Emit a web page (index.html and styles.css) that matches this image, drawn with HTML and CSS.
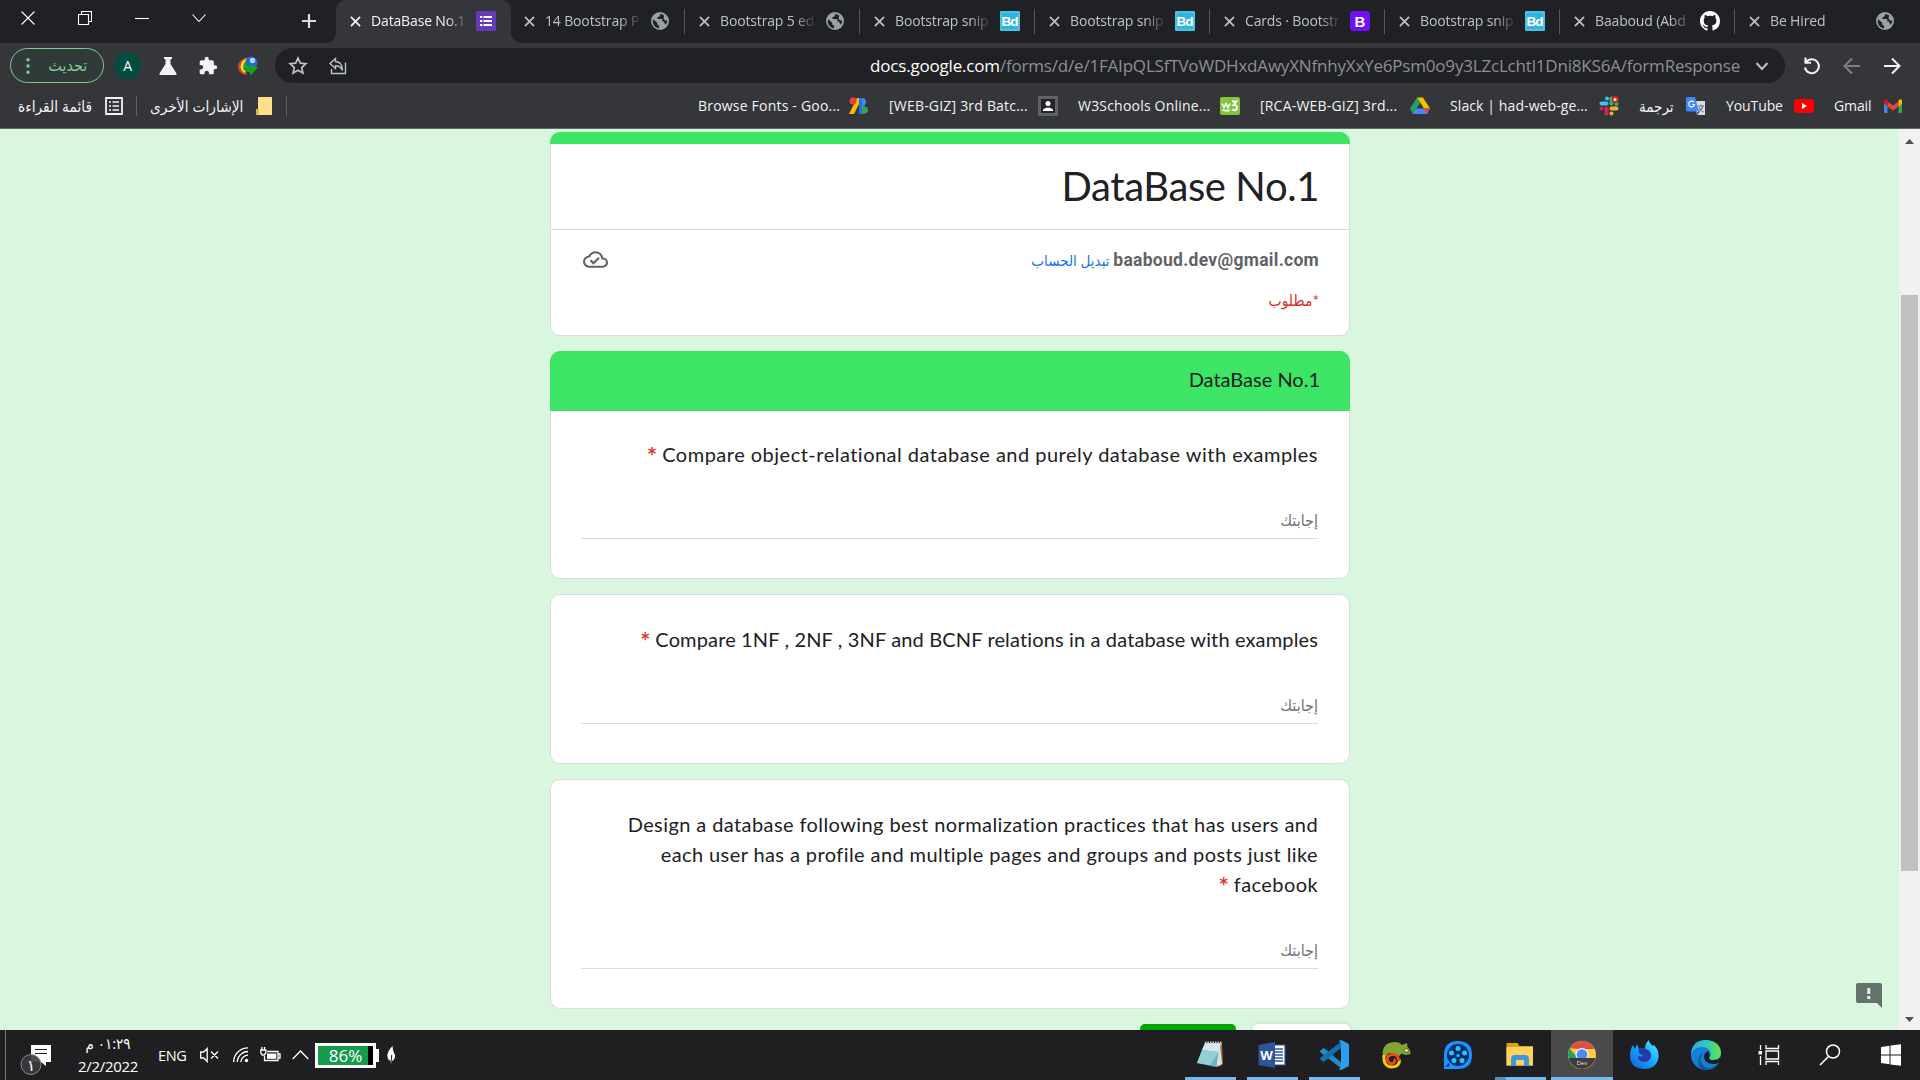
FILE: index.html
```html
<!DOCTYPE html>
<html lang="ar">
<head>
<meta charset="utf-8">
<title>DataBase No.1</title>
<link rel="stylesheet" href="styles.css">
</head>
<body>
<svg class="defs" width="0" height="0">
  <symbol id="x" viewBox="0 0 12 12"><path d="M1 1l10 10M11 1L1 11" fill="none" stroke="currentColor" stroke-width="1.9"/></symbol>
  <symbol id="globe" viewBox="0 0 20 20"><circle cx="10" cy="10" r="9" fill="#9aa0a6"/><path d="M3.2 8.2l4 3.6v1.7l1.9 1.2v2.6C5.500 17 2.800 14 2.800 10zM10.500 2.800l-1 2.600-2 .8v1.800h4.800v2.400h1.600l1.500 3.400c1.200-1.100 1.900-2.400 1.900-4.200h-2.200l-1.600-2 .7-3z" fill="#202124"/></symbol>
  <symbol id="bd" viewBox="0 0 20 20"><rect width="20" height="20" rx="1" fill="#2fb5db"/><rect x="1" y="1" width="18" height="18" fill="none" stroke="#7dd6ee" stroke-width=".7"/><text x="10" y="15" text-anchor="middle" font-family="Liberation Sans" font-weight="bold" font-size="13.500" fill="#fff" textLength="17">Bd</text></symbol>
</svg>

<header class="tabs">
  <div class="window-buttons">
    <svg width="14" height="14" viewBox="0 0 14 14"><path d="M.5.5l13 13M13.500.5l-13 13"/></svg>
    <svg width="14" height="14" viewBox="0 0 14 14"><path d="M.5 3.500h10v10h-10zM3.500 3V.5h10v10H11"/></svg>
    <svg width="14" height="14" viewBox="0 0 14 14"><path d="M0 7.500h14"/></svg>
    <svg width="14" height="14" viewBox="0 0 14 14"><path d="M.5 3.500L7 10.500l6.500-7"/></svg>
  </div>
  <svg class="new-tab" viewBox="0 0 16 16"><path d="M8 1v14M1 8h14" stroke="#dadce0" stroke-width="2.200"/></svg>
  <div class="tab active"><svg class="close"><use href="#x"/></svg><span>DataBase No.1</span><svg class="fav" viewBox="0 0 20 20"><rect width="20" height="20" rx="1.500" fill="#673ab7"/><path d="M4 5h2.300v2H4zM4 9h2.300v2H4zM4 13h2.300v2H4zM7.500 5H16v2H7.500zM7.500 9H16v2H7.500zM7.500 13H16v2H7.500z" fill="#fff"/></svg></div>
  <div class="tab"><svg class="close"><use href="#x"/></svg><span>14 Bootstrap P</span><svg class="fav"><use href="#globe"/></svg></div>
  <div class="tab"><svg class="close"><use href="#x"/></svg><span>Bootstrap 5 ed</span><svg class="fav"><use href="#globe"/></svg></div>
  <div class="tab"><svg class="close"><use href="#x"/></svg><span>Bootstrap snip</span><svg class="fav"><use href="#bd"/></svg></div>
  <div class="tab"><svg class="close"><use href="#x"/></svg><span>Bootstrap snip</span><svg class="fav"><use href="#bd"/></svg></div>
  <div class="tab"><svg class="close"><use href="#x"/></svg><span>Cards · Bootstr</span><svg class="fav" viewBox="0 0 20 20"><rect width="20" height="20" rx="3" fill="#7011f5"/><text x="10" y="15.500" text-anchor="middle" font-family="Liberation Sans" font-weight="bold" font-size="15" fill="#fff">B</text></svg></div>
  <div class="tab"><svg class="close"><use href="#x"/></svg><span>Bootstrap snip</span><svg class="fav"><use href="#bd"/></svg></div>
  <div class="tab"><svg class="close"><use href="#x"/></svg><span>Baaboud (Abd</span><svg class="fav" viewBox="0 0 16 16"><path fill="#fff" d="M8 0C3.580 0 0 3.580 0 8c0 3.540 2.290 6.530 5.470 7.590.4.070.55-.17.55-.38 0-.19-.01-.82-.01-1.490-2.010.37-2.530-.49-2.690-.94-.09-.23-.48-.94-.82-1.130-.28-.15-.68-.52-.01-.53.63-.01 1.080.58 1.230.82.72 1.210 1.870.87 2.330.66.070-.52.28-.87.51-1.070-1.780-.2-3.640-.89-3.640-3.950 0-.87.31-1.590.82-2.150-.08-.2-.36-1.020.08-2.120 0 0 .67-.21 2.200.82.64-.18 1.320-.27 2-.27s1.360.09 2 .27c1.530-1.040 2.200-.82 2.200-.82.44 1.100.16 1.920.08 2.120.51.56.82 1.270.82 2.150 0 3.070-1.870 3.750-3.650 3.950.29.25.54.73.54 1.480 0 1.070-.01 1.930-.01 2.200 0 .21.15.46.55.38A8.010 8.010 0 0016 8c0-4.420-3.580-8-8-8z"/></svg></div>
  <div class="tab"><svg class="close"><use href="#x"/></svg><span>Be Hired</span><svg class="fav"><use href="#globe"/></svg></div>
</header>

<nav class="toolbar">
  <div class="update"><svg width="4" height="16" viewBox="0 0 4 16"><path d="M2 0a1.700 1.700 0 010 3.400A1.700 1.700 0 012 0M2 6.300a1.700 1.700 0 010 3.400 1.700 1.700 0 010-3.400M2 12.600a1.700 1.700 0 010 3.400 1.700 1.700 0 010-3.400" fill="#81c995"/></svg><span dir="rtl">تحديث</span></div>
  <div class="avatar">A</div>
  <svg class="ext" viewBox="0 0 20 20"><path d="M6 1h8v2h-1.500v5L18.500 17.500q.6 1.500-1 1.500h-15q-1.600 0-1-1.500L7.500 8V3H6z" fill="#f1f3f4"/></svg>
  <svg class="ext" viewBox="0 0 24 24"><path d="M20.500 11H19V7c0-1.100-.9-2-2-2h-4V3.500a2.500 2.500 0 00-5 0V5H4c-1.100 0-1.990.9-1.990 2v3.800H3.500c1.490 0 2.700 1.210 2.700 2.700s-1.210 2.700-2.700 2.700H2V20c0 1.100.9 2 2 2h3.800v-1.500c0-1.490 1.210-2.700 2.700-2.700s2.700 1.210 2.700 2.700V22H17c1.100 0 2-.9 2-2v-4h1.500a2.500 2.500 0 000-5z" fill="#f1f3f4"/></svg>
  <svg class="ext" viewBox="0 0 20 20"><circle cx="13" cy="7" r="6.500" fill="#2467cf"/><circle cx="14.500" cy="4.500" r="2.800" fill="#a9d4ff"/><path d="M9 1Q0 4 0 11q.5 6.500 8 8l1-2Q3 15 4 9q1-4 5-8z" fill="#d9442b"/><path d="M9 2Q2.500 5 2.500 11q.5 4 4.500 6l1-2Q4.500 12 6 8z" fill="#f2e332"/><path d="M9 4Q5 8 5.500 12l4 3 1-3Q7.500 9 9 4z" fill="#2a9c3a"/><path d="M4.500 12.500l7-1.500-1-2.500 9.500 3-7.500 8-1-3.500Q7 16 4.500 12.500z" fill="#12a51c"/></svg>
  <div class="omnibox">
    <svg class="star" width="20" height="20" viewBox="0 0 20 20"><path d="M10 2l2.300 5.200 5.600.5-4.200 3.800 1.200 5.600L10 14.200l-4.900 2.900 1.200-5.600L2.100 7.700l5.600-.5z" fill="none" stroke="#bdc1c6" stroke-width="1.700"/></svg>
    <svg class="share" width="20" height="20" viewBox="0 0 20 20"><path d="M7.500 2.500L2 7.500l5.500 5V9.700q5 0 7 4.800 0-8.500-7-9zM3.500 13v4.500h14V6.500" fill="none" stroke="#bdc1c6" stroke-width="1.400"/></svg>
    <div class="url"><b>docs.google.com</b>/forms/d/e/1FAIpQLSfTVoWDHxdAwyXNfnhyXxYe6Psm0o9y3LZcLchtl1Dni8KS6A/formResponse</div>
    <svg class="chev" width="14" height="14" viewBox="0 0 14 14"><path d="M1.500 4L7 10l5.500-6" fill="none" stroke="#bdc1c6" stroke-width="2"/></svg>
  </div>
  <svg class="nav-icon" viewBox="0 0 20 20"><path d="M4.300 6A7 7 0 113 11.500M3.500 1.500V6.800H9" fill="none" stroke="#f1f3f4" stroke-width="2.100"/></svg>
  <svg class="nav-icon" viewBox="0 0 20 20"><path d="M18 10H3M10 2.500L2.500 10l7.500 7.500" fill="none" stroke="#7d7e82" stroke-width="2"/></svg>
  <svg class="nav-icon" viewBox="0 0 20 20"><path d="M2 10h15M10 2.500l7.500 7.500-7.500 7.500" fill="none" stroke="#f1f3f4" stroke-width="2"/></svg>
</nav>

<nav class="bookmarks">
  <div class="saved reading"><span dir="rtl">قائمة القراءة</span><svg width="18" height="18" viewBox="0 0 18 18"><path d="M1 1h16v16H1z" fill="none" stroke="#f1f3f4" stroke-width="1.800"/><path d="M4 5h2M4 9h2M4 13h2M7.500 5H14M7.500 9H14M7.500 13H14" stroke="#f1f3f4" stroke-width="1.700"/></svg></div>
  <div class="saved others"><span dir="rtl">الإشارات الأخرى</span><svg width="16" height="18" viewBox="0 0 16 18"><path d="M2 0h14v18H1q-1 0-1-2v-4h2z" fill="#ffe08a"/><path d="M0 12h3v5q-3 2-3-1z" fill="#e5b73c"/></svg></div>
  <div class="links">
    <div class="bm w1"><span>Browse Fonts - Goo...</span><svg viewBox="0 0 20 20"><path d="M8 2h5L5 18H0z" fill="#fbbc04"/><circle cx="4" cy="5" r="3.500" fill="#ea4335"/><path d="M10 2h4v16h-4z" fill="#1a73e8"/><path d="M13 2q4 0 4 4t-4 4z" fill="#4285f4"/><path d="M13 10q6 0 6 4t-6 4z" fill="#34a853"/></svg></div>
    <div class="bm w2"><span>[WEB-GIZ] 3rd Batc...</span><svg viewBox="0 0 20 20"><rect width="20" height="20" rx="1.500" fill="#5f6368"/><rect x="3" y="3" width="14" height="14" fill="#25262a"/><circle cx="10" cy="7.500" r="2.500" fill="#fff"/><path d="M5 15v-1.500Q10 9.500 15 13.500V15z" fill="#fff"/></svg></div>
    <div class="bm w3"><span>W3Schools Online...</span><svg viewBox="0 0 20 20"><rect y="1" width="20" height="18" rx="2" fill="#86c440"/><path d="M2 7.500l2 4 2-4 2 4 2-4" fill="none" stroke="#fff" stroke-width="1.500"/><path d="M2.500 14q4 1.500 7 0M12 5.500h4.500l-3 3.500q4 0 3.500 3.500-1.500 3-5 1" fill="none" stroke="#fff" stroke-width="1.800"/></svg></div>
    <div class="bm w4"><span>[RCA-WEB-GIZ] 3rd...</span><svg viewBox="0 0 20 20"><path d="M7 1.500h6l7 11h-6z" fill="#fbbc04"/><path d="M7 1.500l3 5.500-7 11-3-5.500z" fill="#1fa463"/><path d="M6 12.500h14L17 18H3z" fill="#4688f4"/><path d="M14 12.500h6L17 18z" fill="#ea4335"/></svg></div>
    <div class="bm w5"><span>Slack | had-web-ge...</span><svg viewBox="0 0 20 20"><g stroke-width="4" stroke-linecap="round"><path d="M2.500 7.500h5M8 2.500v.1" stroke="#36c5f0"/><path d="M12.500 2.500v5M17.500 8v.1" stroke="#2eb67d"/><path d="M12.500 12.500h5M12.500 17.500v.1" stroke="#ecb22e"/><path d="M7.500 12.500v5M2.500 12.500v.1" stroke="#e01e5a"/></g><circle cx="16" cy="3.500" r="3.500" fill="#e01e1e"/><circle cx="16" cy="3.500" r="1.500" fill="#fff"/></svg></div>
    <div class="bm w6"><span dir="rtl">ترجمة</span><svg viewBox="0 0 20 20"><path d="M8 5h11v14h-8z" fill="#dadce0"/><path d="M12 10h6M15 8.500V10M17 10q-1 4-4.500 6M13 11.500q1.500 3 4.500 4.500" fill="none" stroke="#607988" stroke-width="1.100"/><path d="M1 1h8l4 14.500H1.500Q0 15.500 0 14V2q0-1 1-1z" fill="#4285f4"/><path d="M11 16h2.500L11 19.500z" fill="#2b5fb8"/><path d="M8 6.300A2.900 2.900 0 108.500 8.500H6" fill="none" stroke="#fff" stroke-width="1.200"/></svg></div>
    <div class="bm w7"><span>YouTube</span><svg viewBox="0 0 20 20"><rect y="3" width="20" height="14" rx="3.500" fill="#f00"/><path d="M8 7v6l5-3z" fill="#fff"/></svg></div>
    <div class="bm w8"><span>Gmail</span><svg viewBox="0 0 20 20"><path d="M1 5l3.500 2v10H2q-1 0-1-1z" fill="#4285f4"/><path d="M15.500 7L19 5v11q0 1-1 1h-2.500z" fill="#34a853"/><path d="M4.500 5.500l5.500 4 5.500-4v5l-5.500 4-5.500-4z" fill="#ea4335"/><path d="M1 5q0-2.500 2.500-1.500l1 1v6L1 7.500z" fill="#c5221f"/><path d="M19 5q0-2.500-2.500-1.500l-1 1v6L19 7.500z" fill="#fbbc04"/></svg></div>
  </div>
</nav>

<main class="page">
  <form class="form" dir="rtl">
    <section class="card intro">
      <div class="strip"></div>
      <h1 dir="ltr">DataBase No.1</h1>
      <div class="account">
        <p><b>baaboud.dev@gmail.com</b> <a>تبديل الحساب</a></p>
        <svg width="25" height="25" viewBox="0 0 24 24"><path fill="#5f6368" d="M19.350 10.040A7.490 7.490 0 0012 4C9.110 4 6.600 5.640 5.350 8.040A5.994 5.994 0 000 14c0 3.310 2.690 6 6 6h13c2.760 0 5-2.240 5-5 0-2.640-2.050-4.780-4.650-4.960zM19 18H6c-2.210 0-4-1.790-4-4 0-2.050 1.530-3.760 3.560-3.970l1.070-.11.5-.95A5.469 5.469 0 0112 6c2.620 0 4.880 1.860 5.390 4.430l.3 1.500 1.530.11A2.980 2.980 0 0122 15c0 1.650-1.350 3-3 3zm-9-3.820l-2.090-2.090L6.500 13.500 10 17l6.010-6.010-1.410-1.410z"/></svg>
      </div>
      <p class="required">*مطلوب</p>
    </section>
    <section class="card">
      <h2 dir="ltr">DataBase No.1</h2>
      <div class="question first">
        <label><span class="q1">Compare object-relational database and purely database with examples</span> <i>*</i></label>
        <div class="answer">إجابتك</div>
      </div>
    </section>
    <section class="card">
      <div class="question">
        <label><span class="q2">Compare 1NF , 2NF , 3NF and BCNF relations in a database with examples</span> <i>*</i></label>
        <div class="answer">إجابتك</div>
      </div>
    </section>
    <section class="card">
      <div class="question">
        <label><span class="q3">Design a database following best normalization practices that has users and<br>each user has a profile and multiple pages and groups and posts just like<br>facebook</span> <i>*</i></label>
        <div class="answer">إجابتك</div>
      </div>
    </section>
    <div class="actions"><div class="back"></div><div class="send"></div></div>
  </form>
  <svg class="feedback" viewBox="0 0 26 25"><path d="M2 0h22q2 0 2 2v23l-5-5H2q-2 0-2-2V2q0-2 2-2z" fill="#61736a"/><path d="M11.300 5h3v6h-3zM11.300 13h3v3h-3z" fill="#d9f7df"/></svg>
  <div class="scrollbar">
    <svg width="9" height="5" viewBox="0 0 9 5"><path d="M0 5L4.500 0 9 5z" fill="#505050"/></svg>
    <div class="track"><div class="thumb"></div></div>
    <svg width="9" height="5" viewBox="0 0 9 5"><path d="M0 0l4.500 5L9 0z" fill="#505050"/></svg>
  </div>
</main>

<footer class="taskbar">
  <div class="notify">
    <svg width="34" height="34" viewBox="0 0 34 34"><path d="M11 2h20v17H26v4l-5-4H11z" fill="#fff"/><path d="M15 6.500h12M15 10.500h12" stroke="#1f1e20" stroke-width="1.200"/><circle cx="11" cy="21.500" r="10" fill="#3a3a3c" fill-opacity=".9" stroke="#8a8a8a"/><text x="11" y="28" text-anchor="middle" font-family="DejaVu Sans" font-size="16" fill="#fff">١</text></svg>
  </div>
  <div class="clock"><span dir="rtl">٠١:٢٩ م</span><span>2/2/2022</span></div>
  <span class="lang">ENG</span>
  <div class="tray">
    <svg class="t1" width="19" height="16" viewBox="0 0 19 16"><path d="M.7 5h3l3.500-3.500v13L3.700 11h-3zM11 4.500l7 7M18 4.500l-7 7" /></svg>
    <svg class="t2" width="16" height="16" viewBox="0 0 16 16"><path d="M.6 15A14.500 14.500 0 0115 .8M4.200 15A11 11 0 0115 4.500M7.800 15A7.300 7.300 0 0115 8.200"/><circle cx="13.500" cy="13.500" r="1.700" fill="#fff" stroke="none"/></svg>
    <svg class="t3" width="21" height="16" viewBox="0 0 21 16"><path d="M7 4.500h11v9H4.500V9M18.500 7H20v4h-1.500M.8 3h5v3l-1.500 2H2.300L.8 6zM2 0v3M4.600 0v3"/><path class="charge" d="M7 6.500h9.300v5.300H7z"/></svg>
    <svg class="t4" width="17" height="10" viewBox="0 0 17 10"><path d="M.7 9L8.500 1l7.800 8"/></svg>
  </div>
  <div class="battery">86%</div>
  <svg class="leaf" width="9" height="18" viewBox="0 0 9 18"><path d="M5.500 0Q.5 5 .3 9.500q0 4 3.200 5.500l.5 3 1-3q3.500-2 3-6Q6 6 5.500 0z" fill="#fff"/><path d="M4.700 9L4 17" stroke="#1f1e20"/></svg>
  <div class="apps">
    <div class="app open"><svg viewBox="0 0 30 30"><path d="M10 3h17l1 21-4 3z" fill="#9a7440"/><path d="M10 3h16l-5 24L2 23z" fill="#6bb3c0"/><path d="M10 3h16l-2 9-17-2z" fill="#d8e8e9"/><path d="M7 10l17 2-9 13-13-2z" fill="#92ced6"/><path d="M25 5l2 19-6 3z" fill="#d9e4e6"/><path d="M10 2.500h17" stroke="#ccc" stroke-width="2" stroke-dasharray="1.500 1"/></svg></div>
    <div class="app open"><svg viewBox="0 0 30 30"><path d="M16 5h12v20H16z" fill="#fff" stroke="#2b579a" stroke-width="1.200"/><path d="M18 9h8M18 12h8M18 15h8M18 18h8M18 21h8" stroke="#2b579a" stroke-width="1.300"/><path d="M1.500 5L18 2v26L1.500 25z" fill="#2b579a"/><text x="9.500" y="20" text-anchor="middle" font-family="Open Sans" font-weight="bold" font-size="13" fill="#fff" textLength="12">W</text></svg></div>
    <div class="app open"><svg viewBox="0 0 30 30"><path d="M3 9l2-1 18 15v6L1 12q-.5-1 2-3z" fill="#2489ca"/><path d="M3 21l2 1L23 7V1L1 18q-.5 1 2 3z" fill="#1070b3"/><path d="M22 0l7 3.500q1 .5 1 1.500v20q0 1-1 1.500L22 30q-1.500 0-2-1.500 2 0 2-2v-23q0-2-2-2Q20.500 0 22 0z" fill="#27a1ef"/></svg></div>
    <div class="app"><svg viewBox="0 0 30 30"><path d="M2 17Q0 5 10 2.500q7-2 11 2.500l5-2 .5 4q3 2 3 7l-5 1-4-1.500-3 3-3-2q-8-4-9 2z" fill="#83a332"/><circle cx="25.500" cy="10.500" r="1.900" fill="#fff4c0" stroke="#4d5e20"/><path d="M3 15q-1 12 8 12 8-.5 7.500-7.500" fill="none" stroke="#f6c915" stroke-width="3"/><path d="M18 21q-1-7-7-6.500-5.500 1-4.500 6 2 4.500 6 2.500 2.500-2 .5-4" fill="none" stroke="#ed4c19" stroke-width="2.800"/></svg></div>
    <div class="app"><svg viewBox="0 0 30 30"><path d="M1 29V15Q1 1 15 1t14 14-14 14z" fill="#1595ff"/><circle cx="15" cy="15" r="11" fill="#062b70"/><g fill="#18cdf7"><circle cx="15" cy="8.500" r="2.500"/><circle cx="21.500" cy="13" r="2.500"/><circle cx="19" cy="20.500" r="2.500"/><circle cx="11" cy="20.500" r="2.500"/><circle cx="8.500" cy="13" r="2.500"/><circle cx="15" cy="15.500" r="1.500"/></g><path d="M2 27l4-4 .5 3z" fill="#062b70"/></svg></div>
    <div class="app open multi"><svg viewBox="0 0 30 30"><path d="M1.500 3h11l2 3H28v19.500H1.500z" fill="#e3a008"/><path d="M1.500 7H28v18.500H1.500z" fill="#ffd45e"/><path d="M6 26V19q0-4 4-4h10q4 0 4 4v7h-5v-6h-8v6z" fill="#3f97dc"/></svg></div>
    <div class="app open current"><svg viewBox="0 0 30 30"><circle cx="15" cy="15" r="14" fill="#ffce44"/><path d="M2.500 8.500Q7 1 15 1t12.600 8H15z" fill="#dd4f43"/><path d="M2.500 8.500Q-1 17 4 23.500L11 18z" fill="#1da362"/><circle cx="15" cy="14.500" r="6.500" fill="#f1f1f1"/><circle cx="15" cy="14.500" r="5.300" fill="#4c8bf5"/><path d="M1.500 18h27A14 14 0 0115 29 14 14 0 011.500 18z" fill="#3c3c3c"/><text x="15" y="24.500" text-anchor="middle" font-family="Liberation Sans" font-size="6" fill="#ddd">Dev</text></svg></div>
    <div class="app"><svg viewBox="0 0 30 30"><defs><linearGradient id="ff" x1="1" y1="0" x2="0" y2="1"><stop offset="0" stop-color="#4ff0ff"/><stop offset=".5" stop-color="#15a4fa"/><stop offset="1" stop-color="#0b5ee0"/></linearGradient></defs><path d="M1 16q0-7 3-11l2 4 2-5 2 5q4-1 6 0 0-6 4-9 0 3 4 6l1-1q5 5 4.500 12-1.500 12-14.500 12Q1 28 1 16z" fill="url(#ff)"/><path d="M9 10q4-2 8-1 6 2 5 8-2 5-7 5-7-1-6-6 3 2 5-1-4 0-5-5z" fill="#2739a8"/></svg></div>
    <div class="app"><svg viewBox="0 0 30 30"><defs><linearGradient id="eg"><stop offset="0" stop-color="#2da9e8"/><stop offset=".5" stop-color="#2cc8c5"/><stop offset="1" stop-color="#66e442"/></linearGradient></defs><circle cx="15" cy="15" r="15" fill="#1281d5"/><path d="M0 14Q1 0 15 0q14 1 15 12 0 8-8 8-4 0-4-2 3-3 1-7-3-4-8-4Q3 7 0 14z" fill="url(#eg)"/><path d="M12 13q-5 7 1 13 5 4 12 0-4 5-12 4-7-3-6-10 1-5 5-7z" fill="#0c59a4"/><path d="M17 11q-4 2-4 6 1 7 9 7 5 0 7-2l2-8q-2 6-9 6-4 0-4-2 2-3-1-7z" fill="#1f1e20"/></svg></div>
    <div class="app"><svg viewBox="0 0 30 30"><path d="M7.500 5v5M7.500 16v9M13 5v3.500h12.500V5M13 25v-3.500h12.500V25M13 11h12.500v8H13z" fill="none" stroke="#fff" stroke-width="1.300"/><path d="M5.500 11h3.500v3.500H5.500z" fill="#fff"/></svg></div>
    <div class="app"><svg viewBox="0 0 30 30"><circle cx="18" cy="11.500" r="6.500" fill="none" stroke="#fff" stroke-width="1.500"/><path d="M13.500 16.500L5 25" stroke="#fff" stroke-width="1.600"/></svg></div>
    <div class="app"><svg viewBox="0 0 30 30"><path d="M4 7l8.500-1.200v8.700H4zM13.500 5.600L24 4.200v10.300H13.500zM4 15.500h8.500v8.700L4 23zM13.500 15.500H24v10.300l-10.500-1.400z" fill="#fff"/></svg></div>
  </div>
</footer>
</body>
</html>
```
FILE: styles.css
```css
* { box-sizing: border-box; }
body {
  margin: 0;
  width: 1920px;
  height: 1080px;
  overflow: hidden;
  display: flex;
  flex-direction: column;
  font-family: "Open Sans", "DejaVu Sans Condensed", "DejaVu Sans", sans-serif;
  background: #35363a;
}
h1, h2, p { margin: 0; font-weight: 400; }
svg { display: block; flex: none; }
.defs { display: none; }

/* tab strip */
.tabs { height: 43px; display: flex; background: #202124; }
.window-buttons { width: 206px; display: flex; justify-content: space-between; padding: 11px 0 0 21px; }
.window-buttons path { fill: none; stroke: #fff; stroke-width: 1.1; }
.new-tab { width: 16px; height: 16px; margin: 13px 19px 0 95px; }
.tab {
  width: 175px;
  height: 43px;
  display: flex;
  align-items: center;
  padding: 0 16px 1px 13px;
  color: #bdc1c6;
  position: relative;
}
.tab::after { content: ""; position: absolute; right: 1px; top: 9px; width: 1px; height: 25px; background: #55575b; }
.tab.active { padding-left: 14px; padding-right: 15px; color: #f1f3f4; background: #35363a; border-radius: 10px 10px 0 0; }
.tab.active::after, .tab:last-child::after { display: none; }
.tab.active::before {
  content: "";
  position: absolute;
  inset: auto -10px 0;
  height: 10px;
  background:
    radial-gradient(circle at 0 0, transparent 9.5px, #35363a 10px) left / 10px 10px no-repeat,
    radial-gradient(circle at 100% 0, transparent 9.5px, #35363a 10px) right / 10px 10px no-repeat;
}
.close { width: 11px; height: 11px; margin-right: 10px; }
.tab span {
  width: 96px;
  margin-right: 9px;
  padding-bottom: 2px;
  white-space: nowrap;
  font-size: 14px;
  letter-spacing: -.15px;
  mask-image: linear-gradient(90deg, #000 75px, transparent 97px);
}
.fav { width: 20px; height: 20px; }

/* address row */
.toolbar { height: 45px; display: flex; align-items: center; padding: 0 18px 0 10px; }
.update {
  width: 95px;
  height: 35px;
  display: flex;
  align-items: center;
  justify-content: space-between;
  padding: 0 16px 0 15px;
  border: 1.5px solid #81c995;
  border-radius: 18px;
  background: #303a38;
  color: #81c995;
  font-size: 16px;
}
.update span { padding-bottom: 2px; }
.avatar { width: 27px; height: 27px; margin: 0 20px 0 10px; border-radius: 50%; background: #004d40; color: #fff; font-size: 14px; line-height: 27px; text-align: center; }
.ext { width: 20px; height: 20px; margin-left: -3px; margin-right: 23px; }
.omnibox { width: 1510px; height: 35px; margin-left: -6px; padding: 0 16px 0 13px; display: flex; align-items: center; border-radius: 18px; background: #202124; flex: none; }
.share { margin-left: 20px; }
.url { margin-left: auto; margin-right: 15px; color: #8d8f93; font-size: 17px; letter-spacing: -.19px; white-space: nowrap; }
.url b { font-weight: 400; color: #fff; }
.nav-icon { width: 20px; height: 20px; margin-left: 20px; }
.omnibox + .nav-icon { margin-left: 17px; }

/* bookmarks */
.bookmarks { height: 41px; display: flex; align-items: center; padding: 0 17px 5px 18px; color: #f1f3f4; border-bottom: 1px solid #5b6b62; font-size: 14px; white-space: nowrap; }
.saved { display: flex; align-items: center; justify-content: space-between; height: 20px; border-right: 1px solid #5f6368; }
.saved span { font-size: 15.300px; }
.reading { width: 119px; padding-right: 13px; }
.others { width: 150px; padding: 0 14px 0 13px; }
.links { display: flex; gap: 20px; margin-left: auto; }
.bm { display: flex; align-items: center; justify-content: space-between; letter-spacing: .2px; }
.bm svg { width: 20px; height: 20px; }
.w1 { width: 171px; }
.w2 { width: 169px; }
.w3 { width: 162px; }
.w4 { width: 170px; }
.w5 { width: 169px; letter-spacing: .1px; }
.w6 { width: 67px; font-size: 15px; letter-spacing: 0; }
.w7 { width: 88px; letter-spacing: -.1px; }
.w8 { width: 69px; letter-spacing: -.1px; }

/* form page */
.page { position: relative; height: 901px; display: flex; overflow: hidden; background: #d9f7df; }
.form { width: 800px; margin-left: 550px; padding-top: 3px; display: flex; flex-direction: column; gap: 15px; font-family: Lato, "DejaVu Sans Condensed", "DejaVu Sans", sans-serif; color: #202124; }
.card { flex: none; border: 1px solid #dadce0; border-radius: 10px; background: #fff; }
.intro { height: 204px; }
.strip { height: 12px; margin: -1px -1px 0; border-radius: 10px 10px 0 0; background: #3de566; }
.intro h1 { height: 86px; padding: 18px 30px 0; border-bottom: 1px solid #dadce0; font-size: 40px; line-height: 48px; text-align: right; letter-spacing: -.4px; }
.account { display: flex; align-items: center; justify-content: space-between; padding: 0 30px 1px 32px; height: 60px; font-size: 15px; }
.account b { font: 700 17.5px Roboto, sans-serif; letter-spacing: .28px; color: #5f6368; }
.account a { color: #1a73e8; }
.required { padding: 0 30px; color: #d93025; font-size: 15.500px; line-height: 20px; }
h2 { height: 60px; margin: -1px -1px 0; padding-right: 30px; border-radius: 10px 10px 0 0; background: #3de566; font-size: 20px; line-height: 57px; text-align: right; letter-spacing: 0; }
.question { padding: 29px 31px 39px 30px; }
.question.first { padding-top: 28px; }
label { display: block; font-size: 20px; line-height: 30px; white-space: nowrap; }
.q1 { letter-spacing: .49px; }
.q2 { letter-spacing: .14px; }
.q3 { letter-spacing: .41px; }
label i { font-family: Inter, sans-serif; font-style: normal; line-height: 0; color: #d93025; }
.answer { height: 70px; padding-top: 43px; border-bottom: 1px solid #dadce0; font-size: 16px; line-height: 16px; color: #70757a; }
.actions { display: flex; justify-content: flex-start; gap: 17px; }
.actions div { height: 45px; border-radius: 5px; }
.back { width: 97px; background: #fff; box-shadow: 0 0 4px #0002; }
.send { width: 96px; background: #00a600; }
.feedback { position: absolute; left: 1856px; top: 854px; width: 26px; height: 25px; }
.scrollbar { width: 21px; margin-left: auto; padding: 10px 0 8px; display: flex; flex-direction: column; align-items: center; background: #f1f1f1; }
.track { flex: 1; width: 17px; padding-top: 151px; }
.thumb { height: 576px; background: #c1c1c1; }

/* taskbar */
.taskbar { height: 50px; display: flex; align-items: center; background: #1f1e20; color: #fff; }
.notify { width: 73px; height: 50px; margin-left: 5px; padding: 13px 0 0 14px; border-left: 1px solid #77777a; }
.clock { width: 60px; display: flex; flex-direction: column; align-items: center; font-size: 15px; line-height: 23px; letter-spacing: -.3px; white-space: nowrap; }
.lang { width: 28px; margin-left: 20px; font-size: 14.500px; letter-spacing: -.3px; }
.tray { display: flex; align-items: center; margin-left: 14px; }
.tray path { fill: none; stroke: #fff; stroke-width: 1.3; }
.tray .charge { fill: #fff; stroke: none; }
.t2 { margin-left: 14px; }
.t3 { margin-left: 11px; }
.t4 { margin-left: 11px; }
.battery { position: relative; width: 61px; height: 25px; margin-left: 6px; border: 3px solid #fff; background: linear-gradient(90deg, #169a4b 50px, #000 50px); font-size: 17px; line-height: 19px; text-align: center; }
.battery::after { content: ""; position: absolute; right: -6px; top: 3px; width: 3px; height: 13px; background: #fff; }
.leaf { margin-left: 11px; }
.apps { display: flex; margin-left: auto; width: 741px; }
.app { width: 62px; height: 50px; flex: none; display: flex; align-items: center; justify-content: center; background: linear-gradient(#76b9ed, #76b9ed) center bottom / 0 3px no-repeat; }
.app svg { width: 30px; height: 30px; }
.open { background-size: 51px 3px; }
.multi { background-image: linear-gradient(90deg, #5b90b8 11px, #76b9ed 11px); }
.current { background-color: #4a4a4c; background-size: 62px 3px; }
```
